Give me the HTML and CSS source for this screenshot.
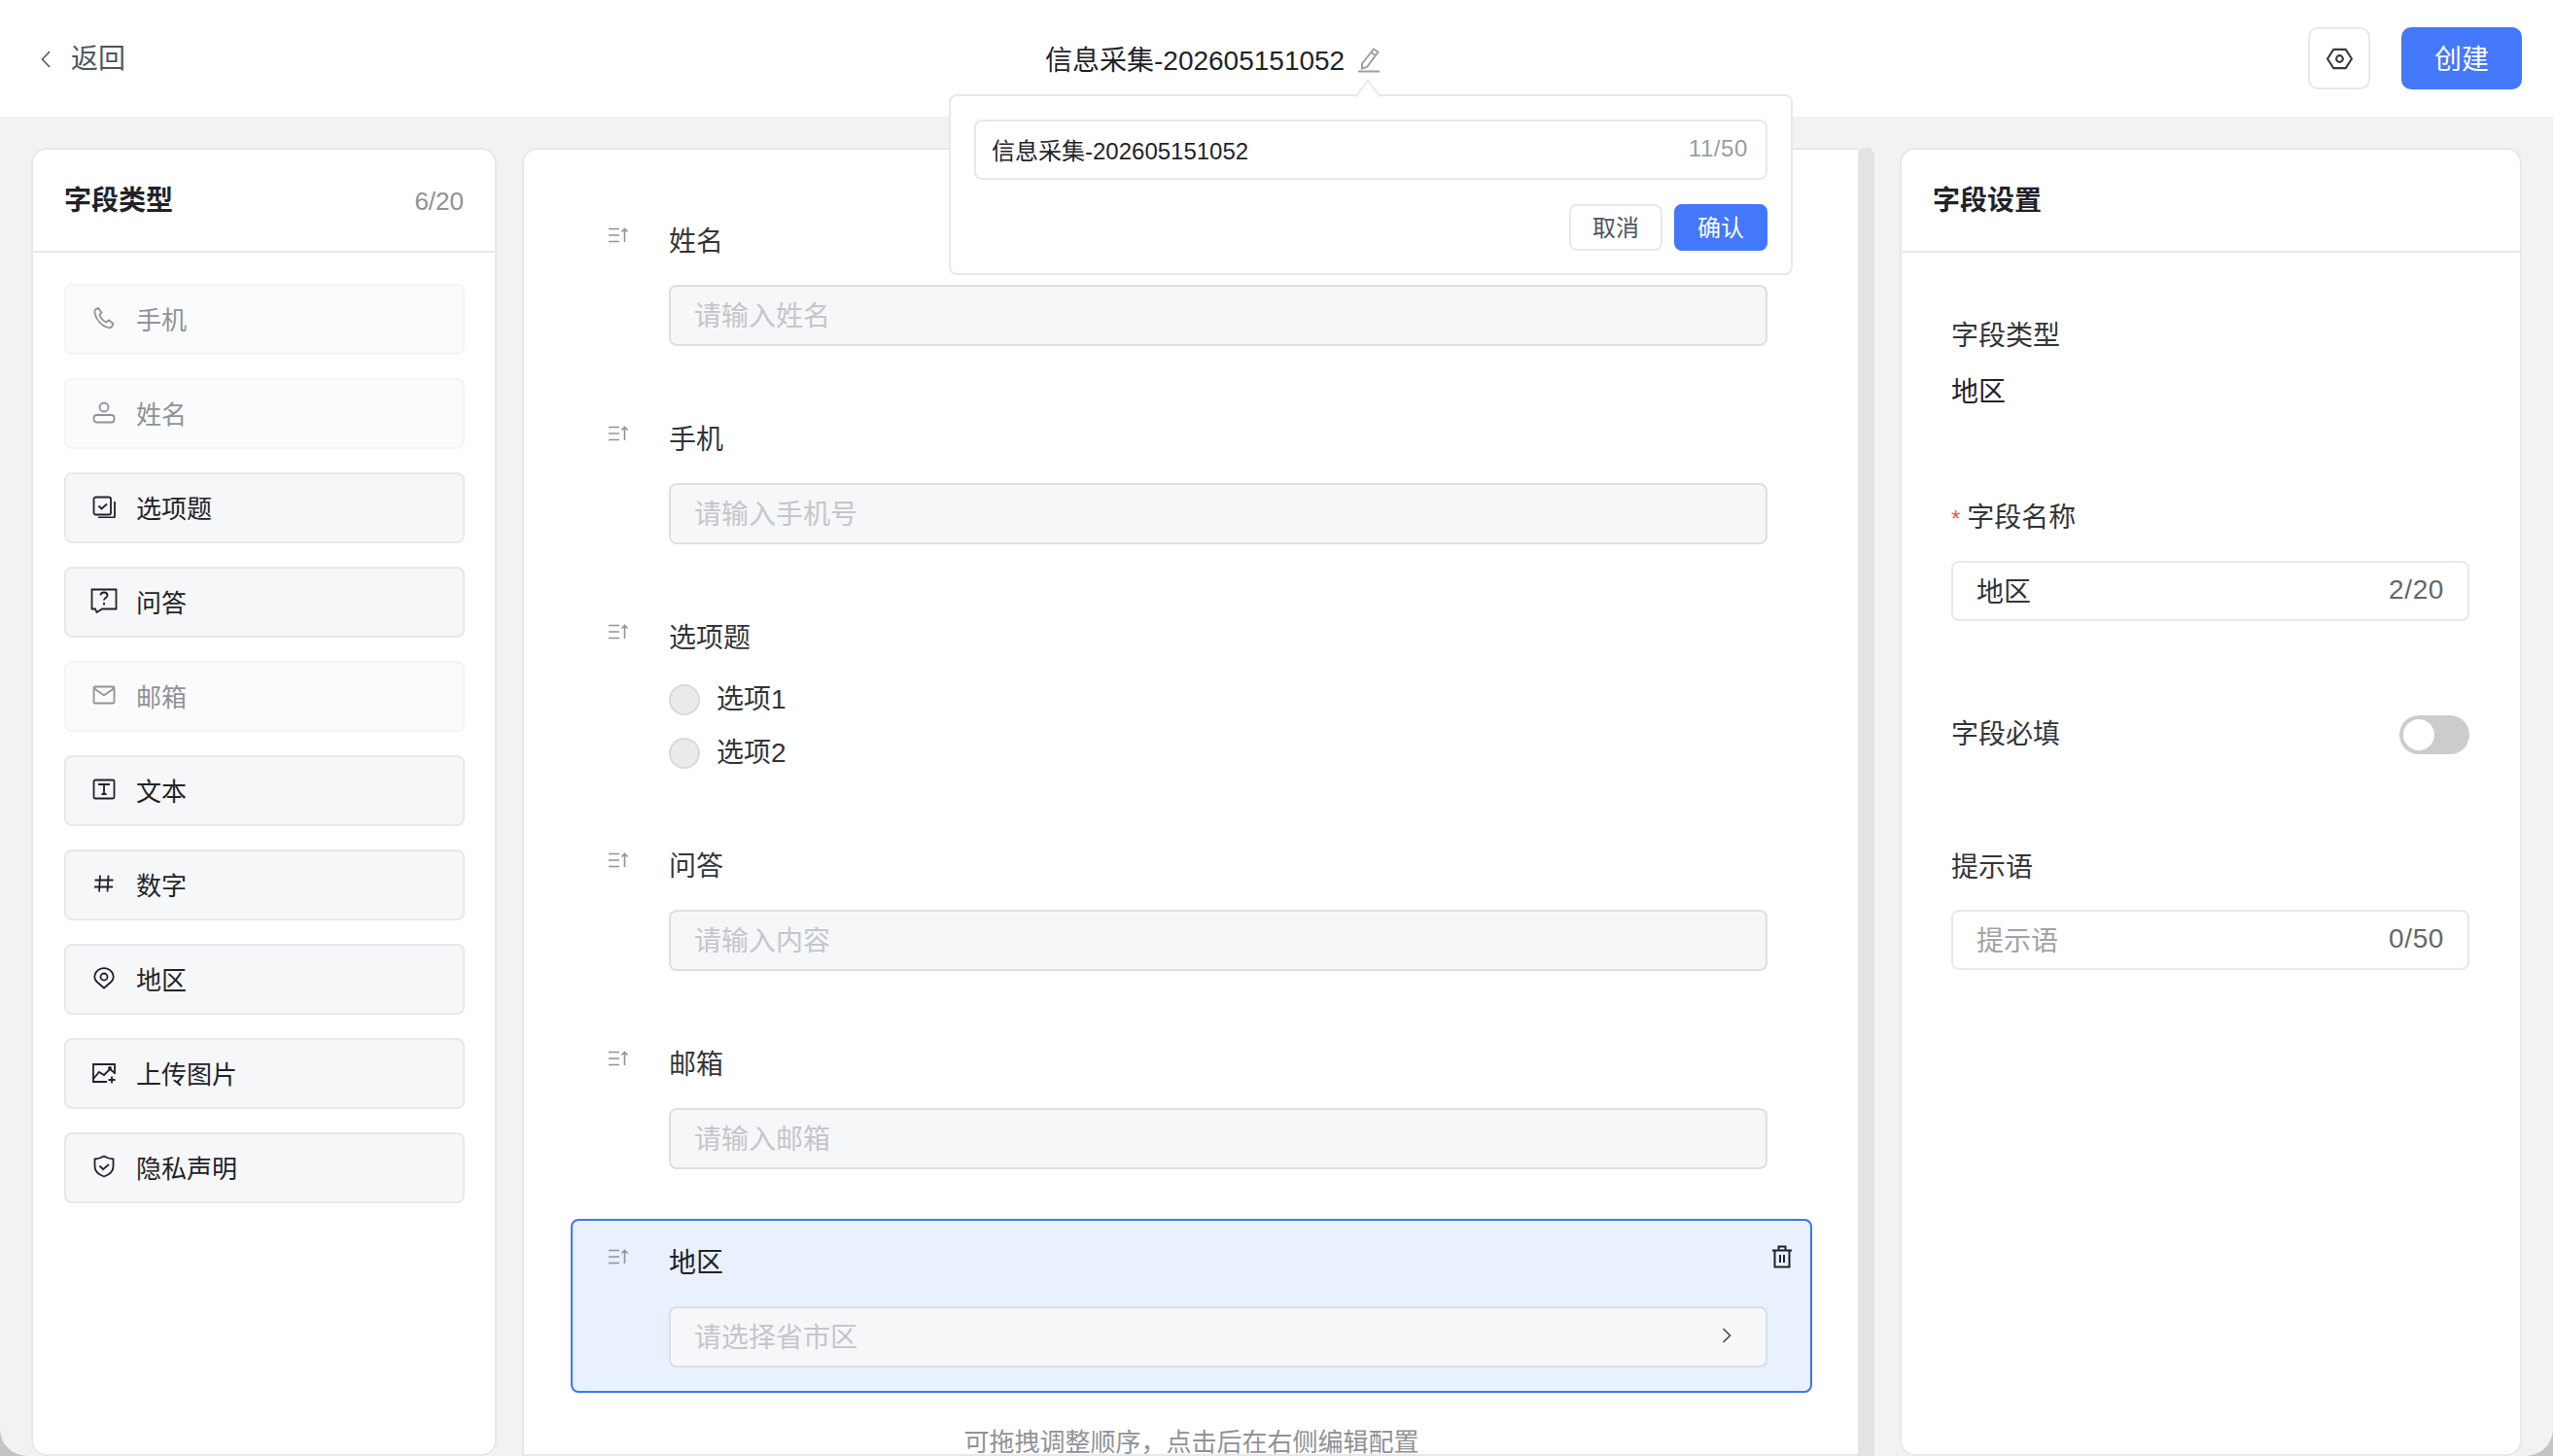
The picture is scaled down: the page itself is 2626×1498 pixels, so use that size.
FILE: index.html
```html
<!DOCTYPE html>
<html lang="zh-CN">
<head>
    <meta charset="UTF-8">
    <meta name="viewport" content="width=device-width, initial-scale=1.0">
    <title>信息采集</title>
    <link rel="stylesheet" href="styles.css">
</head>
<body>
    <div class="app">
        <header class="topbar">
            <div class="back">
                <svg class="back-icon" viewBox="0 0 10 18"><path d="M9 1 1.5 9 9 17"/></svg>
                <span>返回</span>
            </div>
            <div class="form-title">
                <span>信息采集-202605151052</span>
                <svg class="pencil" viewBox="0 0 24 26"><path d="M17 1.5l4.5 3L10 20l-5 1.5V16.5z"/><path d="M14.5 5l4.5 3"/><path d="M1 24.5h22"/></svg>
            </div>
            <div class="top-actions">
                <button class="icon-btn">
                    <svg viewBox="0 0 28 24"><path d="M7.5 2h13L27 12l-6.500 10h-13L1 12z"/><circle cx="14" cy="12" r="3.500"/></svg>
                </button>
                <button class="create-btn">创建</button>
            </div>
        </header>

        <div class="title-popover">
            <div class="popover-input">
                <span>信息采集-202605151052</span>
                <span class="count">11/50</span>
            </div>
            <div class="popover-actions">
                <button class="small-btn">取消</button>
                <button class="small-btn primary">确认</button>
            </div>
        </div>

        <main class="workspace">
            <aside class="panel types-panel">
                <div class="panel-head">
                    <h3>字段类型</h3>
                    <span class="panel-count">6/20</span>
                </div>
                <div class="type-list">
                    <div class="type-item disabled">
                        <svg class="type-icon" viewBox="0 0 24 24"><path d="M3 3.500l3-1.500 3.500 4.500-2 2.500c1 3 3.500 6 7 7.500l2.500-2 4.500 3.500-1.500 3c-.5 1-2 1.500-4 1-7-2-12-8-13.500-15-.3-1.500 0-2.800.5-3.500z"/></svg>
                        <span>手机</span>
                    </div>
                    <div class="type-item disabled">
                        <svg class="type-icon" viewBox="0 0 24 24"><circle cx="12" cy="7" r="4.500"/><rect x="1.500" y="15" width="21" height="7.500" rx="3"/></svg>
                        <span>姓名</span>
                    </div>
                    <div class="type-item">
                        <svg class="type-icon" viewBox="0 0 24 24"><rect x="1.500" y="2.500" width="17.500" height="18" rx="2"/><path d="M6.500 11.500l3 3 5.500-5"/><path d="M23 7v15a1.500 1.500 0 0 1-1.500 1.500H6"/></svg>
                        <span>选项题</span>
                    </div>
                    <div class="type-item">
                        <svg class="type-icon wide" viewBox="0 0 28 26"><path d="M1.500 1.500h25v20H12l-5.500 3.500-1.500-3.500H1.500z"/><path d="M10.500 7.500c0-2 1.500-3 3.500-3s3.500 1.200 3.500 3c0 2.600-3.500 2.500-3.500 5"/><path d="M14 15v2.400"/></svg>
                        <span>问答</span>
                    </div>
                    <div class="type-item disabled">
                        <svg class="type-icon" viewBox="0 0 24 24"><rect x="1.500" y="3.500" width="21" height="17" rx="1.500"/><path d="M1.500 5l10.500 7.500L22.500 5"/></svg>
                        <span>邮箱</span>
                    </div>
                    <div class="type-item">
                        <svg class="type-icon" viewBox="0 0 24 24"><rect x="1.500" y="2.500" width="21" height="19" rx="1.500"/><path d="M7 8V7h10v1M12 7v10M9.500 17h5"/></svg>
                        <span>文本</span>
                    </div>
                    <div class="type-item">
                        <svg class="type-icon" viewBox="0 0 24 24"><path d="M8 3.500 7 20.500M16.500 3.500l-1 17M2.500 8.500h19M2 15.500h19"/></svg>
                        <span>数字</span>
                    </div>
                    <div class="type-item">
                        <svg class="type-icon" viewBox="0 0 24 24"><path d="M12 22.500 4.500 16c-3-3-3-7.500 0-10.500C8.500 1 15.500 1 19.500 5.500c3 3 3 7.500 0 10.500z"/><circle cx="12" cy="11" r="3.500"/></svg>
                        <span>地区</span>
                    </div>
                    <div class="type-item">
                        <svg class="type-icon" viewBox="0 0 24 24"><path d="M15 22H1V4h22v10"/><path d="M1 19l6-7 5 3 6-6 5 4"/><circle cx="18" cy="8" r="1"/><path d="M20 16.500v7M16.500 20h7"/></svg>
                        <span>上传图片</span>
                    </div>
                    <div class="type-item">
                        <svg class="type-icon" viewBox="0 0 24 24"><path d="M12 1.500c3 1.800 6 2.800 9.500 3V12c0 5-4 8.500-9.500 10.500C6.500 20.500 2.500 17 2.500 12V4.500c3.500-.2 6.500-1.200 9.500-3z"/><path d="M7.500 11.500l3.500 3.500 6-5"/></svg>
                        <span>隐私声明</span>
                    </div>
                </div>
            </aside>

            <section class="canvas-wrap">
                <div class="panel canvas">
                    <div class="field">
                        <svg class="drag" viewBox="0 0 21 16"><path d="M0 1.500h11M0 8h11M0 14.500h11"/><path d="M16.500 15V1.500M13.500 4.500l3-3 3 3"/></svg>
                        <div class="field-body">
                            <div class="field-label">姓名</div>
                            <div class="fake-input">请输入姓名</div>
                        </div>
                    </div>
                    <div class="field">
                        <svg class="drag" viewBox="0 0 21 16"><path d="M0 1.500h11M0 8h11M0 14.500h11"/><path d="M16.500 15V1.500M13.500 4.500l3-3 3 3"/></svg>
                        <div class="field-body">
                            <div class="field-label">手机</div>
                            <div class="fake-input">请输入手机号</div>
                        </div>
                    </div>
                    <div class="field">
                        <svg class="drag" viewBox="0 0 21 16"><path d="M0 1.500h11M0 8h11M0 14.500h11"/><path d="M16.500 15V1.500M13.500 4.500l3-3 3 3"/></svg>
                        <div class="field-body">
                            <div class="field-label">选项题</div>
                            <div class="options">
                                <label class="option"><i class="radio"></i>选项1</label>
                                <label class="option"><i class="radio"></i>选项2</label>
                            </div>
                        </div>
                    </div>
                    <div class="field">
                        <svg class="drag" viewBox="0 0 21 16"><path d="M0 1.500h11M0 8h11M0 14.500h11"/><path d="M16.500 15V1.500M13.500 4.500l3-3 3 3"/></svg>
                        <div class="field-body">
                            <div class="field-label">问答</div>
                            <div class="fake-input">请输入内容</div>
                        </div>
                    </div>
                    <div class="field">
                        <svg class="drag" viewBox="0 0 21 16"><path d="M0 1.500h11M0 8h11M0 14.500h11"/><path d="M16.500 15V1.500M13.500 4.500l3-3 3 3"/></svg>
                        <div class="field-body">
                            <div class="field-label">邮箱</div>
                            <div class="fake-input">请输入邮箱</div>
                        </div>
                    </div>
                    <div class="field active">
                        <svg class="drag" viewBox="0 0 21 16"><path d="M0 1.500h11M0 8h11M0 14.500h11"/><path d="M16.500 15V1.500M13.500 4.500l3-3 3 3"/></svg>
                        <div class="field-body">
                            <div class="field-label">地区</div>
                            <div class="fake-input">
                                <span>请选择省市区</span>
                                <svg class="chevron" viewBox="0 0 10 18"><path d="M1.500 2 8.500 9l-7 7"/></svg>
                            </div>
                        </div>
                        <svg class="trash" viewBox="0 0 22 24"><path d="M1 5.500h20M7.500 5V1.500h7V5"/><path d="M3.500 5.500v17h15v-17"/><path d="M9 10v8M13 10v8"/></svg>
                    </div>
                    <p class="canvas-hint">可拖拽调整顺序，点击后在右侧编辑配置</p>
                </div>
                <div class="scrollbar"></div>
            </section>

            <aside class="panel settings-panel">
                <div class="panel-head">
                    <h3>字段设置</h3>
                </div>
                <div class="settings">
                    <div class="setting type-setting">
                        <div class="setting-label">字段类型</div>
                        <div class="setting-value">地区</div>
                    </div>
                    <div class="setting">
                        <div class="setting-label"><em>*</em>字段名称</div>
                        <div class="text-input">
                            <span>地区</span>
                            <span class="input-count">2/20</span>
                        </div>
                    </div>
                    <div class="setting switch-row">
                        <div class="setting-label">字段必填</div>
                        <div class="switch"><i></i></div>
                    </div>
                    <div class="setting">
                        <div class="setting-label">提示语</div>
                        <div class="text-input">
                            <span class="placeholder">提示语</span>
                            <span class="input-count">0/50</span>
                        </div>
                    </div>
                </div>
            </aside>
        </main>
    </div>
</body>
</html>
```

FILE: styles.css
```css
:root {
    --primary: #4478fb;
    --border: #e7e8ec;
    --page: #f1f2f4;
    --text: #1f2329;
    --label: #333639;
    --muted: #8f9296;
    --placeholder: #c4c6ca;
}

* {
    box-sizing: border-box;
}

html,
body {
    margin: 0;
    padding: 0;
    height: 100%;
    overflow: hidden;
}

body {
    background: #c4c4c4;
    color: var(--text);
    font-family: "Liberation Sans", "Noto Sans CJK SC", sans-serif;
    font-size: 28px;
}

button {
    font-family: inherit;
    cursor: pointer;
}

svg {
    fill: none;
    stroke: currentColor;
    stroke-width: 2;
    flex-shrink: 0;
}

.app {
    position: relative;
    height: 100%;
    background: var(--page);
    border-radius: 0 0 28px 28px;
    overflow: hidden;
}

/* Top bar */
.topbar {
    height: 120px;
    padding: 0 32px 0 42px;
    background: #fff;
    display: grid;
    grid-template-columns: 1033px auto 1fr;
    align-items: center;
}

.back {
    display: flex;
    align-items: center;
    gap: 21px;
    padding-top: 2px;
    color: #4e5663;
    line-height: 40px;
}

.back-icon {
    width: 10px;
    height: 18px;
    stroke-width: 1.6;
}

.form-title {
    display: flex;
    align-items: center;
    gap: 13px;
    margin-top: 5px;
    line-height: 40px;
}

.pencil {
    width: 24px;
    height: 26px;
    margin-top: -2px;
    color: #9a9ea8;
}

.top-actions {
    display: flex;
    justify-content: flex-end;
    gap: 32px;
}

.icon-btn {
    width: 64px;
    height: 64px;
    padding: 0;
    background: #fff;
    border: 2px solid var(--border);
    border-radius: 10px;
    color: #3a3a3a;
    display: flex;
    align-items: center;
    justify-content: center;
}

.icon-btn svg {
    width: 27px;
    height: 23px;
    stroke-width: 2.2;
}

.create-btn {
    width: 124px;
    height: 64px;
    padding: 0 0 2px;
    background: var(--primary);
    border: none;
    border-radius: 10px;
    color: #fff;
    font-size: 28px;
}

/* Title popover */
.title-popover {
    position: absolute;
    top: 97px;
    left: 976px;
    width: 868px;
    height: 186px;
    padding: 24px 24px 0 24px;
    background: #fff;
    border: 2px solid var(--border);
    border-radius: 8px;
    z-index: 5;
}

.title-popover::before {
    content: "";
    position: absolute;
    top: -11px;
    left: 418px;
    width: 20px;
    height: 20px;
    background: #fff;
    border-top: 2px solid var(--border);
    border-left: 2px solid var(--border);
    transform: rotate(45deg) skew(8deg, 8deg);
}

.popover-input {
    height: 62px;
    padding: 0 18px 2px 16px;
    border: 2px solid var(--border);
    border-radius: 8px;
    display: flex;
    align-items: center;
    justify-content: space-between;
    font-size: 24px;
}

.count {
    color: #9a9da3;
    letter-spacing: 0.6px;
}

.popover-actions {
    margin-top: 25px;
    display: flex;
    justify-content: flex-end;
    gap: 12px;
}

.small-btn {
    width: 96px;
    height: 48px;
    padding: 0 0 3px;
    background: #fff;
    border: 2px solid var(--border);
    border-radius: 8px;
    color: #4e5663;
    font-size: 24px;
}

.small-btn.primary {
    background: var(--primary);
    border-color: var(--primary);
    color: #fff;
}

/* Three columns */
.workspace {
    height: 1378px;
    padding: 32px 32px 0;
    display: flex;
    gap: 26px;
    align-items: stretch;
}

.panel {
    background: #fff;
    border: 2px solid var(--border);
    border-radius: 16px;
}

.types-panel {
    width: 479px;
    flex-shrink: 0;
}

.settings-panel {
    width: 640px;
    flex-shrink: 0;
}

.panel-head {
    height: 106px;
    padding: 2px 32px 0;
    border-bottom: 2px solid var(--border);
    display: flex;
    align-items: center;
    justify-content: space-between;
}

.panel-head h3 {
    margin: 0;
    font-size: 28px;
    font-weight: 600;
    line-height: 40px;
}

.panel-count {
    color: var(--muted);
    font-size: 26px;
}

.type-list {
    padding: 32px 31px 32px 32px;
    display: flex;
    flex-direction: column;
    gap: 24px;
}

.type-item {
    height: 73px;
    padding: 0 0 3px 27px;
    background: #f6f7f9;
    border: 2px solid var(--border);
    border-radius: 8px;
    display: flex;
    align-items: center;
    gap: 21px;
    font-size: 26px;
}

.type-item.disabled {
    background: #fafbfc;
    border-color: #f3f4f6;
    color: var(--muted);
}

.type-icon {
    width: 24px;
    height: 24px;
    stroke-width: 1.8;
}

.type-icon.wide {
    width: 28px;
    height: 26px;
    margin-left: -2px;
    margin-right: -2px;
}

/* Form canvas */
.canvas-wrap {
    flex: 1;
    min-width: 0;
    position: relative;
    display: flex;
}

.canvas {
    flex: 1;
    padding: 49px 47px 0 48px;
    border-right: none;
    border-radius: 16px 0 0 0;
    display: flex;
    flex-direction: column;
    gap: 25px;
}

.scrollbar {
    width: 17px;
    background: #e3e3e3;
    border-radius: 8px 8px 0 0;
}

.field {
    position: relative;
    padding: 24px 44px 24px 37px;
    border: 2px solid transparent;
    border-radius: 8px;
    display: flex;
    gap: 41px;
}

.field.active {
    background: #e9f0fe;
    border-color: #3c76fb;
}

.drag {
    width: 21px;
    height: 16px;
    margin-top: 5px;
    color: #909398;
    stroke-width: 1.6;
}

.field-body {
    flex: 1;
    min-width: 0;
}

.field-label {
    line-height: 40px;
    color: var(--label);
}

.field.active .field-label {
    color: var(--text);
}

.fake-input {
    height: 63px;
    margin-top: 24px;
    padding: 0 24px 4px;
    background: #f6f7f9;
    border: 2px solid #dedfe3;
    border-radius: 8px;
    color: var(--placeholder);
    display: flex;
    align-items: center;
    justify-content: space-between;
}

.chevron {
    width: 10px;
    height: 18px;
    margin-right: 11px;
    color: #4a4a4a;
    stroke-width: 1.6;
}

.options {
    margin-top: 23px;
    display: flex;
    flex-direction: column;
    gap: 16px;
    padding-bottom: 1px;
}

.option {
    height: 39px;
    display: flex;
    align-items: center;
    gap: 17px;
    color: var(--label);
    line-height: 39px;
}

.radio {
    width: 32px;
    height: 32px;
    background: #ebebeb;
    border: 2px solid #d9d9d9;
    border-radius: 50%;
}

.trash {
    position: absolute;
    top: 25px;
    right: 18px;
    width: 22px;
    height: 24px;
    color: #1f2329;
}

.canvas-hint {
    margin: 13px 0 0;
    color: var(--muted);
    font-size: 26px;
    line-height: 26px;
    text-align: center;
}

/* Settings */
.settings {
    padding: 0 52px 0 51px;
}

.setting {
    margin-bottom: 97px;
}

.type-setting {
    margin-top: 66px;
    margin-bottom: 89px;
}

.setting-label {
    color: var(--label);
    line-height: 40px;
}

.setting-label em {
    margin-right: 7px;
    color: #f55;
    font-size: 24px;
    font-style: normal;
}

.setting-value {
    margin-top: 18px;
    line-height: 40px;
}

.text-input {
    height: 62px;
    margin-top: 23px;
    padding: 0 24px 2px;
    border: 2px solid var(--border);
    border-radius: 8px;
    display: flex;
    align-items: center;
    justify-content: space-between;
    color: var(--label);
}

.placeholder {
    color: #a0a2a6;
}

.input-count {
    color: #666;
    letter-spacing: 0.6px;
}

.switch-row {
    display: flex;
    align-items: center;
    justify-content: space-between;
}

.switch {
    width: 72px;
    height: 40px;
    padding: 4px;
    background: #ccc;
    border-radius: 20px;
}

.switch i {
    display: block;
    width: 32px;
    height: 32px;
    background: #fff;
    border-radius: 50%;
}
```
